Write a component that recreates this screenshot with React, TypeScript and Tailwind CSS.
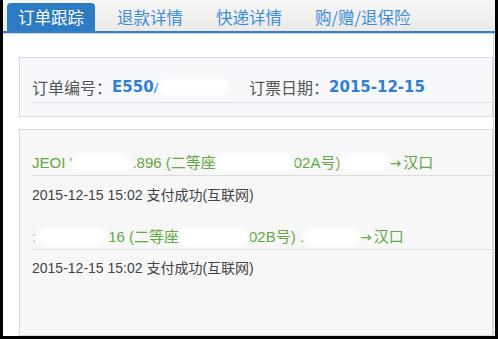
import React from "react";

const Blob = ({ w }: { w: number }) => (
  <span
    className="inline-block h-[18px] rounded-full bg-white blur-[2px] align-middle"
    style={{ width: w }}
  />
);

const Arrow = () => (
  <span className="font-['DejaVu_Sans',sans-serif] text-[14px] mr-[2px]">→</span>
);

export default function App() {
  const cjk = "font-['Liberation_Sans','Noto_Sans_CJK_SC',sans-serif]";
  return (
    <div className="w-[500px] h-[339px] bg-white overflow-hidden">
      <div className="w-[498px] h-[339px] flex flex-col border-l-[3px] border-r-[3px] border-b-[3px] border-black">
        {/* tab bar */}
        <div className="h-[31px] flex items-end pl-[4px] gap-[11px] bg-[linear-gradient(#f6f6f6,#f2f0ee_60%,#e9e9e9)] font-['Noto_Sans_CJK_SC',sans-serif] text-[16.5px]">
          <div className="h-[28px] px-[11px] flex items-center rounded-t-[4px] bg-[#2b7cc2] text-white">
            订单跟踪
          </div>
          <div className="h-[28px] px-[11px] flex items-center text-[#3d8dd8]">退款详情</div>
          <div className="h-[28px] px-[11px] flex items-center text-[#3d8dd8]">快递详情</div>
          <div className="h-[28px] px-[11px] flex items-center text-[#3d8dd8]">购/赠/退保险</div>
        </div>
        <div className="h-[2px] bg-[#3a7fc1]" />
        <div className="h-[1px] bg-[#b9d6ee]" />

        {/* content */}
        <div className="flex-1 flex flex-col pl-[16px] pt-[23px] mr-[1px] border-r border-[#d4d4d4]">
          <div className="border border-[#d8d8d8] bg-[#f7f8fb] pl-[12px] pt-[14px] pb-[13px]">
            <div className="h-[31px] flex items-center border-b border-[#dcdcdc] text-[16px]">
              <div className="w-[217px] flex items-center">
                <span className="font-['Noto_Sans_CJK_SC',sans-serif] text-[#555]">订单编号：</span>
                <span className="font-['DejaVu_Sans',sans-serif] font-bold text-[15px] text-[#2f7fd6]">E550</span>
                <span className="text-[#2f7fd6] text-[14px]">/</span>
                <Blob w={70} />
              </div>
              <span className="font-['Noto_Sans_CJK_SC',sans-serif] text-[#555]">订票日期：</span>
              <span className="font-['DejaVu_Sans',sans-serif] font-bold text-[15px] text-[#2f7fd6]">2015-12-15</span>
            </div>
          </div>

          <div className="mt-[12px] flex-1 border border-[#d8d8d8] bg-[#f7f7f7] pl-[12px] pt-[18px]">
            <div className={`h-[28px] pt-[3px] flex items-center border-b border-[#dcdcdc] text-[15px] text-[#64a846] whitespace-pre ${cjk}`}>
              <span>JEOI '</span>
              <Blob w={60} />
              <span>.896 (二等座</span>
              <Blob w={78} />
              <span>02A号)</span>
              <Blob w={49} />
              <Arrow />
              <span>汉口</span>
            </div>
            <div className={`pt-[9px] pb-[17px] h-[46px] leading-[20px] text-[14px] text-[#444] ${cjk}`}>
              2015-12-15 15:02 支付成功(互联网)
            </div>
            <div className={`h-[28px] pt-[3px] flex items-center border-b border-[#dcdcdc] text-[15px] text-[#64a846] whitespace-pre ${cjk}`}>
              <span className="text-[#9bc48a]">:</span>
              <Blob w={72} />
              <span>16 (二等座</span>
              <Blob w={70} />
              <span>02B号)</span>
              <span> .</span>
              <Blob w={56} />
              <Arrow />
              <span>汉口</span>
            </div>
            <div className={`pt-[8px] leading-[20px] text-[14px] text-[#444] ${cjk}`}>
              2015-12-15 15:02 支付成功(互联网)
            </div>
          </div>
        </div>
      </div>
    </div>
  );
}
